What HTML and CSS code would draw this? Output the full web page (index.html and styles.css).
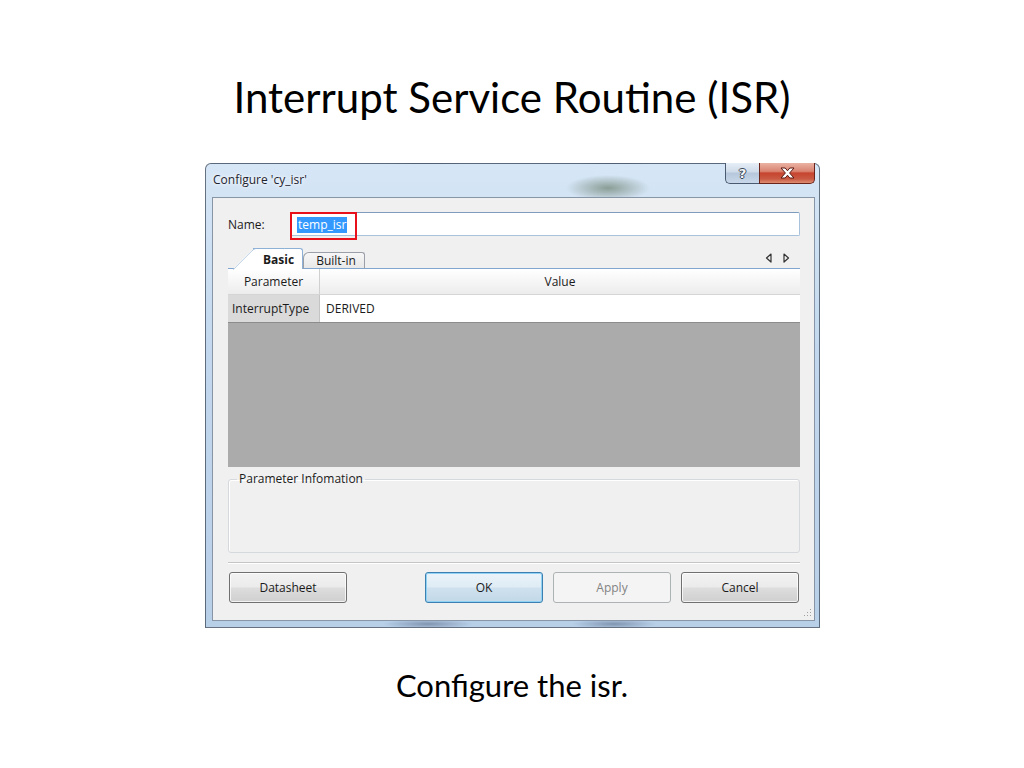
FILE: index.html
```html
<!DOCTYPE html>
<html lang="en">
<head>
<meta charset="utf-8">
<title>Interrupt Service Routine (ISR)</title>
<link rel="stylesheet" href="styles.css">
</head>
<body>
<div class="slide">
  <h1 class="slide-title">Interrupt Service Routine (ISR)</h1>

  <div class="window">
    <div class="titlebar">
      <span class="win-title">Configure 'cy_isr'</span>
      <div class="caption-btns">
        <div class="cap-btn help"><span class="help-glyph">?</span></div>
        <div class="cap-btn close">
          <svg width="15" height="12" viewBox="0 0 15 12">
            <path d="M1 1h4.2l2.3 2.8L9.8 1H14L9.6 6 14 11H9.8L7.5 8.2 5.2 11H1l4.4-5z" fill="#fff" stroke="#5a1a14" stroke-width="1" stroke-linejoin="round"/>
          </svg>
        </div>
      </div>
    </div>

    <div class="client">
      <div class="name-row">
        <span class="name-label">Name:</span>
        <div class="textbox">
          <span class="sel">temp_isr</span>
          <span class="redbox"></span>
        </div>
      </div>

      <div class="tabstrip">
        <div class="tab tab-active">Basic</div>
        <div class="tab tab-inactive">Built-in</div>
        <div class="tab-arrows">
          <svg width="7" height="10" viewBox="0 0 7 10"><path d="M6 1L1.5 5 6 9z" fill="none" stroke="#333" stroke-width="1.2" stroke-linejoin="round"/></svg>
          <svg width="7" height="10" viewBox="0 0 7 10"><path d="M1 1l4.5 4L1 9z" fill="none" stroke="#333" stroke-width="1.2" stroke-linejoin="round"/></svg>
        </div>
      </div>

      <div class="grid">
        <div class="grid-head">
          <div class="col-param">Parameter</div>
          <div class="col-value">Value</div>
        </div>
        <div class="grid-row">
          <div class="col-param cell-name">InterruptType</div>
          <div class="col-value cell-val">DERIVED</div>
        </div>
        <div class="grid-empty"></div>
      </div>

      <fieldset class="groupbox">
        <legend>Parameter Infomation</legend>
        <div class="groupbox-body"></div>
      </fieldset>

      <div class="separator"></div>

      <div class="button-row">
        <button class="btn">Datasheet</button>
        <div class="spacer"></div>
        <button class="btn btn-default">OK</button>
        <button class="btn btn-disabled" disabled>Apply</button>
        <button class="btn">Cancel</button>
      </div>

      <svg class="grip" width="9" height="9" viewBox="0 0 9 9">
        <g fill="#a0a0a0">
          <rect x="7" y="1" width="1" height="1"/>
          <rect x="4" y="4" width="1" height="1"/><rect x="7" y="4" width="1" height="1"/>
          <rect x="1" y="7" width="1" height="1"/><rect x="4" y="7" width="1" height="1"/><rect x="7" y="7" width="1" height="1"/>
        </g>
      </svg>
    </div>
  </div>

  <p class="slide-caption">Configure the isr.</p>
</div>
</body>
</html>
```

FILE: styles.css
```css
* { box-sizing: border-box; }

body {
  margin: 0;
  background: #ffffff;
  font-family: "Lato", "Open Sans", sans-serif;
}

.slide {
  width: 1024px;
  height: 768px;
  display: flex;
  flex-direction: column;
  align-items: center;
}

.slide-title {
  margin: 72px 0 0;
  font-family: "Lato", sans-serif;
  font-weight: 400;
  font-size: 42px;
  line-height: 50px;
  color: #000;
}

.slide-caption {
  margin: 39px 0 0;
  font-family: "Lato", sans-serif;
  font-size: 31px;
  line-height: 36px;
  color: #000;
}

/* ---------- window ---------- */
.window {
  align-self: flex-start;
  margin-left: 205px;
  margin-top: 41px;
  width: 615px;
  height: 465px;
  border: 1px solid rgba(40, 50, 65, 0.65);
  border-radius: 6px 6px 0 0;
  background:
    radial-gradient(ellipse 42px 13px at 402px 24px, rgba(90, 110, 85, 0.6), rgba(90, 110, 85, 0) 100%),
    radial-gradient(ellipse 45px 5px at 222px 460px, rgba(70, 90, 120, 0.5), rgba(70, 90, 120, 0) 100%),
    radial-gradient(ellipse 42px 5px at 408px 460px, rgba(70, 90, 120, 0.5), rgba(70, 90, 120, 0) 100%),
    linear-gradient(180deg, #d6e6f6 0%, #c3d8ee 40%, #b8cfe8 100%);
  display: flex;
  flex-direction: column;
  font-family: "Open Sans", "Liberation Sans", sans-serif;
  font-size: 12px;
  color: #1b1b1b;
}

.titlebar {
  height: 33px;
  display: flex;
  align-items: flex-start;
  padding-left: 7px;
}

.win-title {
  margin-top: 8px;
  line-height: 16px;
  font-size: 12px;
  color: #1e2430;
  text-shadow: 0 0 6px #fff, 0 0 3px #fff;
}

.caption-btns {
  margin-left: auto;
  margin-right: 4px;
  margin-top: -1px;
  display: flex;
}

.cap-btn {
  height: 21px;
  display: flex;
  align-items: center;
  justify-content: center;
  border: 1px solid #4a5a70;
  border-top: none;
}

.help {
  width: 34px;
  border-right: none;
  border-radius: 0 0 0 5px;
  background: linear-gradient(180deg, #e6eef7 0%, #cfdbe9 45%, #b6c7dc 50%, #c9d8e9 100%);
}

.help-glyph {
  font-family: "DejaVu Sans", sans-serif;
  font-weight: bold;
  font-size: 13px;
  line-height: 13px;
  color: #f4f6f8;
  text-shadow: 1px 0 0 #3b4656, -1px 0 0 #3b4656, 0 1px 0 #3b4656, 0 -1px 0 #3b4656;
}

.close {
  width: 56px;
  border-color: #6b2419;
  border-radius: 0 0 5px 0;
  background: linear-gradient(180deg, #eab2a4 0%, #d9826f 42%, #c7442f 50%, #c95a43 80%, #dd8e72 100%);
}

/* ---------- client ---------- */
.client {
  position: relative;
  height: 424px;
  margin: 0 4px 0 6px;
  border: 1px solid #8795a7;
  background: #f0f0f0;
  padding: 14px 14px 0 15px;
  display: flex;
  flex-direction: column;
}

.name-row {
  display: flex;
  align-items: center;
  height: 24px;
}

.name-label {
  width: 62px;
  flex: none;
}

.textbox {
  position: relative;
  flex: 1;
  height: 24px;
  background: #fff;
  border: 1px solid #a9c2dc;
  border-top-color: #7f9cbf;
  border-radius: 2px;
  padding: 3px 0 0 6px;
}

.sel {
  display: inline-block;
  height: 16px;
  line-height: 16px;
  padding: 0 1px;
  background: #3399ff;
  color: #fff;
}

.redbox {
  position: absolute;
  left: -1px;
  top: -1px;
  width: 67px;
  height: 28px;
  border: 2px solid #e8111b;
}

/* ---------- tabs ---------- */
.tabstrip {
  margin-top: 12px;
  height: 21px;
  display: flex;
  align-items: flex-end;
  border-bottom: 1px solid #80a6d0;
}

.tab {
  position: relative;
  display: flex;
  align-items: center;
  justify-content: center;
  margin-bottom: -1px;
}

.tab-active {
  z-index: 2;
  margin-left: 25px;
  width: 50px;
  height: 21px;
  font-weight: bold;
  background: #fff;
  border-top: 1px solid #8cb0d6;
  border-right: 1px solid #8cb0d6;
  border-radius: 0 3px 0 0;
  padding-left: 2px;
}

.tab-active::before {
  content: "";
  position: absolute;
  z-index: -1;
  left: -21px;
  top: -1px;
  width: 30px;
  height: 21px;
  background: #fff;
  border-left: 1px solid #8cb0d6;
  border-top: 1px solid #8cb0d6;
  border-radius: 3px 0 0 0;
  transform-origin: left bottom;
  transform: skewX(-45deg);
}

.tab-inactive {
  z-index: 1;
  width: 62px;
  height: 17px;
  background: linear-gradient(180deg, #f7f7f7, #e8e8e8);
  border-top: 1px solid #9a9fa8;
  border-right: 1px solid #9a9fa8;
  border-left: 1px solid #9a9fa8;
  border-radius: 6px 3px 0 0;
  border-bottom: 1px solid #80a6d0;
  padding-left: 4px;
}

.tab-arrows {
  margin-left: auto;
  margin-right: 10px;
  align-self: center;
  display: flex;
  gap: 11px;
}

/* ---------- grid ---------- */
.grid {
  height: 198px;
  display: flex;
  flex-direction: column;
  background: #ababab;
}

.grid-head {
  height: 26px;
  display: flex;
  background: linear-gradient(180deg, #ffffff 0%, #f4f4f4 60%, #ececec 100%);
  border-bottom: 1px solid #d5d5d5;
}

.grid-head > div {
  display: flex;
  align-items: center;
  justify-content: center;
}

.col-param {
  width: 92px;
  flex: none;
  border-right: 1px solid #d0d0d0;
}

.col-value {
  flex: 1;
}

.grid-row {
  height: 28px;
  display: flex;
  border-bottom: 1px solid #8c8c8c;
}

.grid-row > div {
  display: flex;
  align-items: center;
}

.cell-name {
  background: #dadada;
  padding-left: 4px;
  border-right-color: #c4c4c4;
}

.cell-val {
  background: #fff;
  padding-left: 6px;
}

.grid-empty {
  flex: 1;
}

/* ---------- group box ---------- */
.groupbox {
  margin: 4px 0 0;
  padding: 0 8px;
  border: 1px solid #d5d9dd;
  border-radius: 3px;
  box-shadow: inset 1px 1px 0 #fff;
}

.groupbox legend {
  padding: 0 2px;
  line-height: 16px;
}

.groupbox-body {
  height: 65px;
}

.separator {
  margin-top: 9px;
  height: 2px;
  border-top: 1px solid #c6c6c6;
  border-bottom: 1px solid #fff;
}

/* ---------- buttons ---------- */
.button-row {
  margin-top: 8px;
  display: flex;
  gap: 10px;
  padding-left: 1px;
  padding-right: 1px;
}

.spacer {
  flex: 1;
}

.btn {
  width: 118px;
  height: 31px;
  font-family: "Open Sans", "Liberation Sans", sans-serif;
  font-size: 12px;
  color: #1b1b1b;
  border: 1px solid #707070;
  border-radius: 3px;
  background: linear-gradient(180deg, #f2f2f2 0%, #ebebeb 48%, #dddddd 52%, #cfcfcf 100%);
  box-shadow: inset 0 0 0 1px rgba(255, 255, 255, 0.75);
  padding: 0;
}

.btn-default {
  border-color: #3c7fb1;
  background: linear-gradient(180deg, #eaf3f9 0%, #dfecf5 48%, #cfe1ee 52%, #c2d8e8 100%);
  box-shadow: inset 0 0 0 1px #8fd2f4;
}

.btn-disabled {
  border-color: #adb2b5;
  background: #f4f4f4;
  color: #838383;
  box-shadow: none;
}

.grip {
  position: absolute;
  right: 2px;
  bottom: 3px;
}
```
